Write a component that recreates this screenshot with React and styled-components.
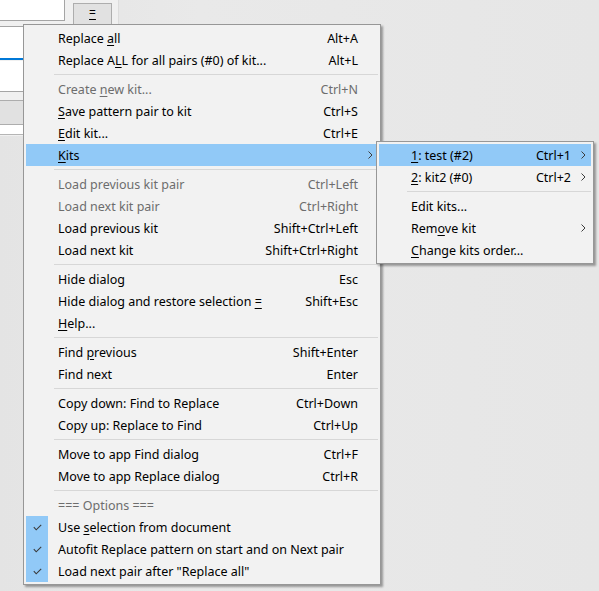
import React from "react";
import styled, { createGlobalStyle } from "styled-components";

const GlobalStyle = createGlobalStyle`
  html, body {
    margin: 0;
    padding: 0;
    background: #e6e6e6;
    overflow: hidden;
  }
  body {
    font-family: "Noto Sans", "Liberation Sans", sans-serif;
    font-size: 12.5px;
  }
`;

const mainItems = [
  { label: "Replace &all", shortcut: "Alt+A" },
  { label: "Replace A&LL for all pairs (#0) of kit...", shortcut: "Alt+L" },
  { sep: true },
  { label: "Create &new kit...", shortcut: "Ctrl+N", disabled: true },
  { label: "&Save pattern pair to kit", shortcut: "Ctrl+S" },
  { label: "&Edit kit...", shortcut: "Ctrl+E" },
  { label: "&Kits", sub: true, active: true },
  { sep: true },
  { label: "Load previous kit pair", shortcut: "Ctrl+Left", disabled: true },
  { label: "Load next kit pair", shortcut: "Ctrl+Right", disabled: true },
  { label: "Load previous kit", shortcut: "Shift+Ctrl+Left" },
  { label: "Load next kit", shortcut: "Shift+Ctrl+Right" },
  { sep: true },
  { label: "Hide dialog", shortcut: "Esc" },
  { label: "Hide dialog and restore selection &=", shortcut: "Shift+Esc" },
  { label: "&Help..." },
  { sep: true },
  { label: "Find &previous", shortcut: "Shift+Enter" },
  { label: "Find next", shortcut: "Enter" },
  { sep: true },
  { label: "Copy down: Find to Replace", shortcut: "Ctrl+Down" },
  { label: "Copy up: Replace to Find", shortcut: "Ctrl+Up" },
  { sep: true },
  { label: "Move to app Find dialog", shortcut: "Ctrl+F" },
  { label: "Move to app Replace dialog", shortcut: "Ctrl+R" },
  { sep: true },
  { label: "=== Options ===", disabled: true },
  { label: "Use &selection from document", checked: true },
  { label: "Autofit Replace pattern on start and on Next pair", checked: true },
  { label: 'Load next pair after "Replace all"', checked: true },
];

const kitItems = [
  { label: "&1: test (#2)", shortcut: "Ctrl+1", sub: true, active: true },
  { label: "&2: kit2 (#0)", shortcut: "Ctrl+2", sub: true },
  { sep: true },
  { label: "Edit kits..." },
  { label: "Rem&ove kit", sub: true },
  { label: "&Change kits order..." },
];

// "&x" marks the access key, shown underlined
const Caption = ({ text }) => {
  const i = text.indexOf("&");
  if (i < 0) return text;
  return (
    <>
      {text.slice(0, i)}
      <AccessKey>{text[i + 1]}</AccessKey>
      {text.slice(i + 2)}
    </>
  );
};

const Chevron = () => (
  <svg width="5" height="8" viewBox="0 0 5 8">
    <polyline points="0.5,0.5 4,4 0.5,7.5" fill="none" stroke="#3c3c3c" strokeWidth="1" />
  </svg>
);

const Check = () => (
  <svg width="9" height="7" viewBox="0 0 9 7">
    <polyline points="0.8,3.2 3.2,5.8 8.2,0.8" fill="none" stroke="#3a3a3a" strokeWidth="1.1" />
  </svg>
);

const MenuList = ({ items }) =>
  items.map((item, index) => {
    if (item.sep) return <Separator key={index} />;
    return (
      <Item key={index} $active={item.active} $disabled={item.disabled}>
        <CheckBox $checked={item.checked}>{item.checked && <Check />}</CheckBox>
        <Label>
          <Caption text={item.label} />
        </Label>
        <Shortcut>{item.shortcut}</Shortcut>
        <Arrow>{item.sub && <Chevron />}</Arrow>
      </Item>
    );
  });

const App = () => {
  return (
    <>
      <GlobalStyle />
      <Screen>
        <Dialog>
          <TopRow>
            <PatternField />
            <DialogButton>
              <AccessKey>=</AccessKey>
            </DialogButton>
          </TopRow>
          <FindField />
          <ReplaceField />
          <Spacer />
          <LowerButton />
          <LowerField />
        </Dialog>

        <Menu>
          <MenuList items={mainItems} />
        </Menu>

        <SubMenu>
          <MenuList items={kitItems} />
        </SubMenu>
      </Screen>
    </>
  );
};

export default App;

const Screen = styled.div`
  position: relative;
  width: 599px;
  height: 591px;
  background: linear-gradient(90deg, #e4e4e4 0px, #e9e9e9 200px, #e6e6e6 100%);
  overflow: hidden;
`;

const Dialog = styled.div`
  width: 118px;
  height: 136px;
  background: #f0f0f0;
  border-right: 1px solid #dcdcdc;
  display: flex;
  flex-direction: column;
`;

const TopRow = styled.div`
  display: flex;
  gap: 8px;
  height: 24px;
  align-items: flex-start;
`;

const PatternField = styled.div`
  width: 65px;
  height: 21px;
  background: #ffffff;
  border-right: 1px solid #a5a5a5;
  border-bottom: 1px solid #a5a5a5;
  box-sizing: border-box;
`;

const DialogButton = styled.div`
  width: 39px;
  height: 24px;
  margin-top: 3px;
  background: #e1e1e1;
  border: 1px solid #adadad;
  box-sizing: border-box;
  display: flex;
  justify-content: center;
  padding-top: 3px;
  font-size: 12px;
  line-height: 12px;
  color: #000;
`;

const FindField = styled.div`
  margin-top: 2px;
  height: 34px;
  background: #ffffff;
  border-top: 1px solid #a5a5a5;
  border-bottom: 2px solid #0078d7;
  box-sizing: border-box;
`;

const ReplaceField = styled.div`
  margin-top: 1px;
  height: 31px;
  background: #ffffff;
  border-bottom: 1px solid #a5a5a5;
  box-sizing: border-box;
`;

const Spacer = styled.div`
  height: 8px;
`;

const LowerButton = styled.div`
  height: 25px;
  background: #e1e1e1;
  border-top: 1px solid #adadad;
  border-bottom: 1px solid #adadad;
  box-sizing: border-box;
`;

const LowerField = styled.div`
  height: 10px;
  background: #ffffff;
  border-bottom: 1px solid #b5b5b5;
  box-sizing: border-box;
`;

const Menu = styled.div`
  position: absolute;
  left: 23px;
  top: 24px;
  width: 358px;
  padding: 2px;
  box-sizing: border-box;
  background: #f2f2f2;
  border: 1px solid #979797;
  box-shadow: 2px 2px 2px rgba(0, 0, 0, 0.35);
  display: flex;
  flex-direction: column;
`;

const SubMenu = styled(Menu)`
  left: 376px;
  top: 141px;
  width: 218px;
`;

const Item = styled.div`
  height: 22px;
  display: flex;
  align-items: center;
  background: ${(p) => (p.$active ? "#91c9f7" : "transparent")};
  color: ${(p) => (p.$disabled ? "#6d6d6d" : "#000000")};
  white-space: nowrap;
`;

const CheckBox = styled.div`
  width: 22px;
  height: 22px;
  margin-right: 10px;
  background: ${(p) => (p.$checked ? "#91c9f7" : "transparent")};
  display: flex;
  align-items: center;
  justify-content: center;
`;

const Label = styled.span`
  flex: 1;
  line-height: 22px;
  padding-top: 1px;
`;

const Shortcut = styled.span`
  line-height: 22px;
  padding-top: 1px;
`;

const Arrow = styled.span`
  width: 20px;
  height: 22px;
  display: flex;
  align-items: center;
  justify-content: center;
  padding-left: 4px;
  box-sizing: border-box;
`;

const AccessKey = styled.span`
  text-decoration: underline;
  text-underline-offset: 2px;
`;

const Separator = styled.div`
  height: 7px;
  margin-left: 28px;
  display: flex;
  align-items: center;

  &::after {
    content: "";
    flex: 1;
    height: 1px;
    background: #d7d7d7;
  }
`;
